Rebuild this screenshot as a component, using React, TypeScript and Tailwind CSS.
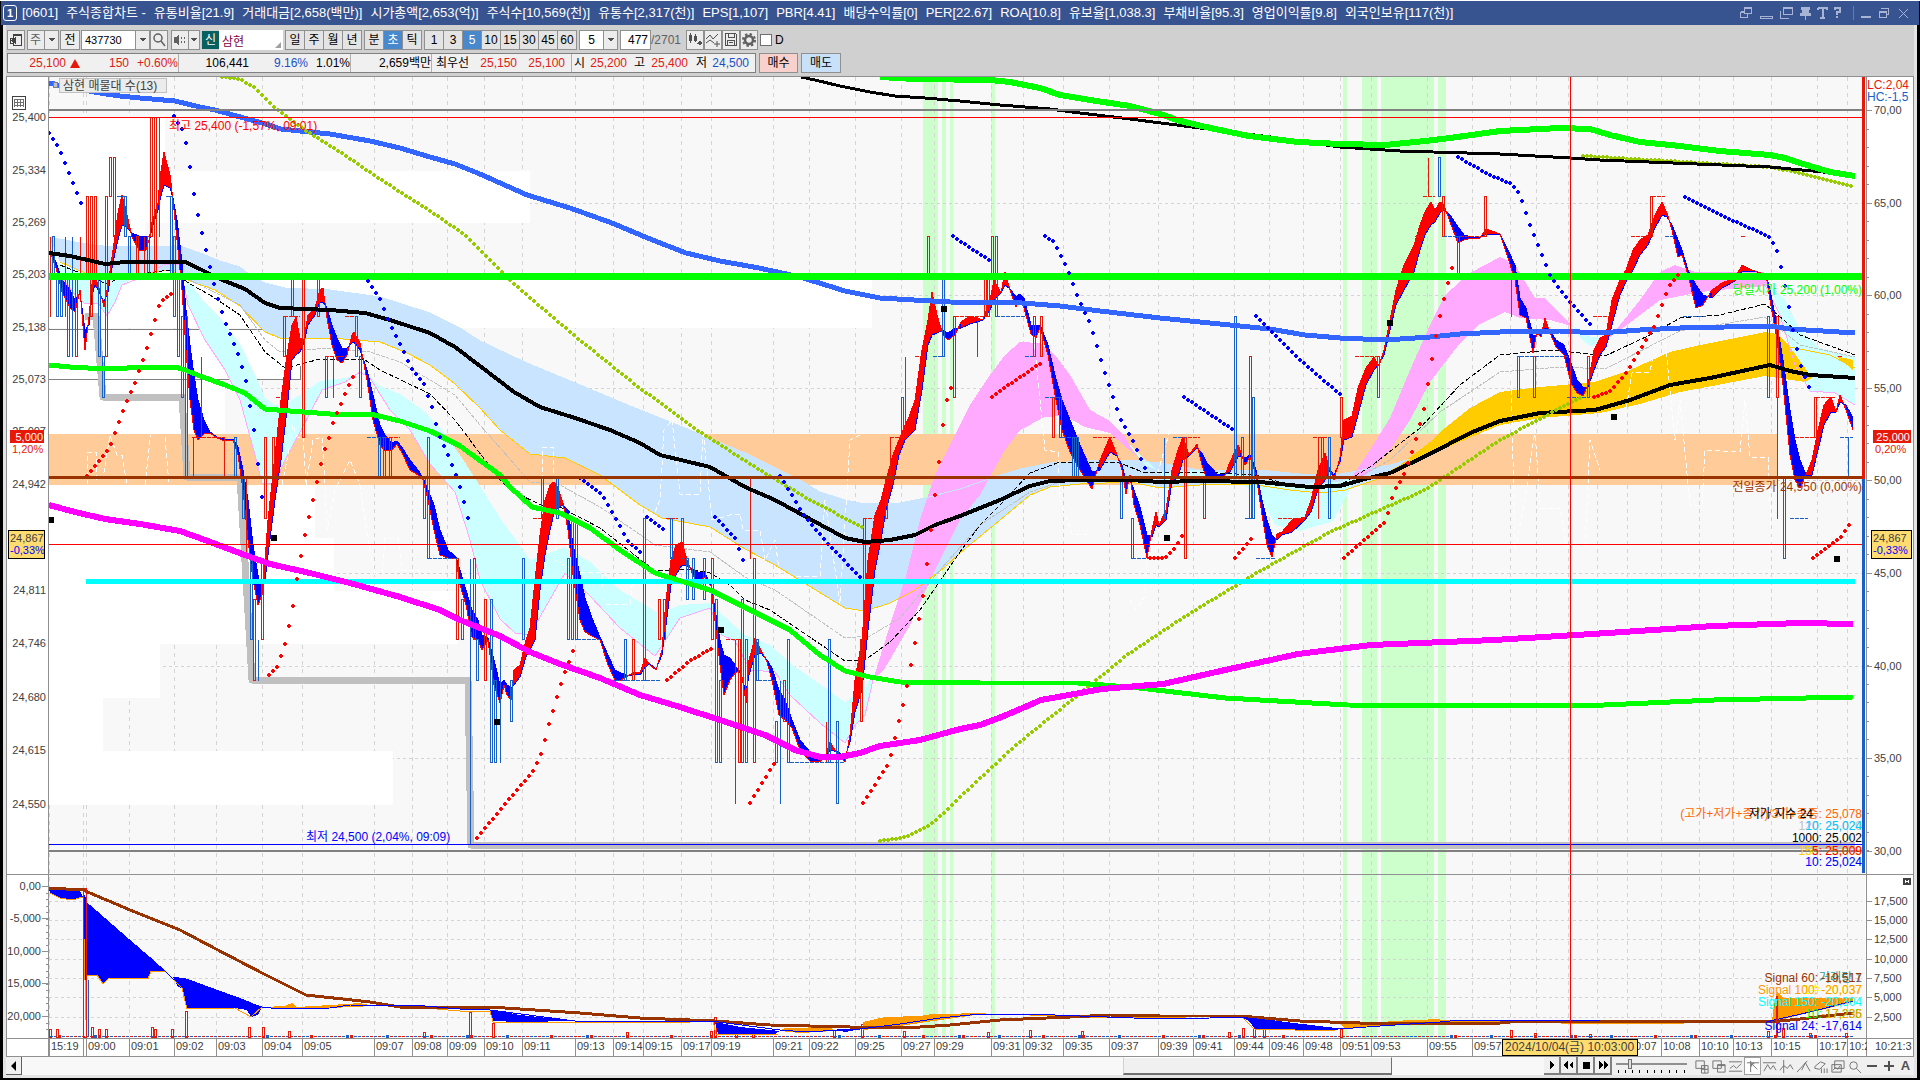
import type { ReactNode } from "react";

const RED = "#e81808";
const BLUE = "#1860c8";

// log price scale, 25,400 at the top and 24,500 at the bottom
const levelY = (price: number) => Math.round(117 + 20150 * Math.log(25400 / price));

const STATS = [
  "[0601]",
  "주식종합차트 -",
  "유통비율[21.9]",
  "거래대금[2,658(백만)]",
  "시가총액[2,653(억)]",
  "주식수[10,569(천)]",
  "유통수[2,317(천)]",
  "EPS[1,107]",
  "PBR[4.41]",
  "배당수익률[0]",
  "PER[22.67]",
  "ROA[10.8]",
  "유보율[1,038.3]",
  "부채비율[95.3]",
  "영업이익률[9.8]",
  "외국인보유[117(천)]",
];

const TIMES: [number, string][] = [
  [49, "15:19"], [83, ""], [86, "09:00"], [129, "09:01"], [174, "09:02"], [216, "09:03"], [262, "09:04"],
  [302, "09:05"], [374, "09:07"], [412, "09:08"], [447, "09:09"], [484, "09:10"], [522, "09:11"],
  [575, "09:13"], [613, "09:14"], [643, "09:15"], [681, "09:17"], [711, "09:19"], [773, "09:21"],
  [809, "09:22"], [855, "09:25"], [901, "09:27"], [934, "09:29"], [991, "09:31"], [1023, "09:32"],
  [1063, "09:35"], [1109, "09:37"], [1158, "09:39"], [1193, "09:41"], [1234, "09:44"], [1269, "09:46"],
  [1303, "09:48"], [1340, "09:51"], [1371, "09:53"], [1427, "09:55"], [1472, "09:57"], [1510, ""],
  [1536, ""], [1568, ""], [1597, ""], [1627, "10:07"], [1661, "10:08"], [1699, "10:10"], [1733, "10:13"],
  [1771, "10:15"], [1817, "10:17"], [1847, "10:2"],
];

const LEFT_LABELS: [number, string][] = [
  [117, "25,400"], [170, "25,334"], [222, "25,269"], [274, "25,203"], [327, "25,138"], [379, "25,073"],
  [431, "25,007"], [484, "24,942"], [590, "24,811"], [643, "24,746"], [697, "24,680"], [750, "24,615"],
  [804, "24,550"],
];
const RIGHT_LABELS: [number, string][] = [
  [110, "70,00"], [203, "65,00"], [295, "60,00"], [388, "55,00"], [480, "50,00"], [573, "45,00"],
  [666, "40,00"], [758, "35,00"], [851, "30,00"],
];
const SUB_LEFT: [number, string][] = [
  [886, "0,00"], [918, "-5,000"], [951, "10,000"], [983, "15,000"], [1016, "20,000"],
];
const SUB_RIGHT: [number, string][] = [
  [901, "17,500"], [920, "15,000"], [939, "12,500"], [959, "10,000"], [978, "7,500"], [997, "5,000"], [1017, "2,500"],
];

// volume-by-price rows: y, bottom, right edge
const PROFILE = [
  [118, 171, 165], [171, 223, 530], [223, 276, 145], [276, 328, 872], [329, 379, 300], [379, 434, 225],
  [485, 538, 315], [538, 591, 334], [591, 644, 458], [644, 698, 160], [698, 751, 103], [751, 805, 393],
];
const BANDS = [
  [923, 938], [942, 946], [950, 953], [991, 995], [1343, 1347], [1362, 1377], [1381, 1434], [1438, 1446],
];

const LINES = {
  upperBlue:
    "49,83 62,86 100,93 120,96 140,98 175,101 200,107 215,110 262,123 281,129 330,134 370,141 400,148 430,157 455,164 480,174 527,195 570,208 612,223 650,239 686,253 720,261 759,268 800,277 845,291 860,294 880,298 914,300 950,302 1022,303 1060,306 1100,311 1160,318 1220,324 1270,329 1305,335 1340,338 1385,340 1430,337 1460,334 1500,332 1560,331 1600,333 1640,330 1680,328 1770,326 1790,329 1855,333",
  upperBlack:
    "801,77 815,80 840,86 870,92 895,96 925,98 960,101 1000,105 1050,109 1080,113 1130,119 1200,128 1286,139 1340,147 1400,151 1500,154 1570,158 1600,160 1770,167 1855,175",
  upperGreen:
    "880,77 915,79 990,80 1010,82 1040,88 1060,95 1090,100 1130,106 1160,114 1180,121 1215,129 1249,136 1298,142 1340,144 1385,145 1425,141 1450,138 1500,131 1560,128 1590,129 1610,135 1640,142 1680,146 1720,151 1770,155 1785,158 1800,163 1830,172 1855,176",
  midGreen:
    "49,365 70,367 105,369 150,367 175,367 185,370 200,376 225,385 245,393 265,409 290,411 330,414 370,414 400,421 430,431 460,446 500,475 510,487 532,507 560,513 590,528 620,550 655,573 710,590 730,600 760,615 790,630 820,655 845,671 870,677 900,682 980,683 1078,683 1139,688 1225,698 1347,705 1518,706 1604,705 1714,700 1853,697",
  magenta:
    "49,505 75,512 105,519 140,524 180,531 205,540 245,555 270,564 310,573 350,583 400,597 440,610 460,620 500,636 530,652 560,664 600,678 640,695 680,707 720,720 765,735 795,750 820,757 840,757 860,753 880,746 920,740 960,729 980,725 1004,716 1041,700 1102,689 1163,684 1225,670 1298,654 1371,645 1494,640 1592,634 1714,626 1800,623 1853,624",
  mainBlack:
    "49,253 70,256 105,264 125,262 160,262 185,262 200,269 220,279 245,289 265,303 280,308 330,310 365,313 390,320 430,333 455,347 480,366 514,392 540,407 575,418 610,430 640,443 660,455 710,467 745,487 775,500 845,538 865,542 890,540 915,535 935,525 960,516 1000,500 1030,486 1050,481 1080,480 1130,480 1160,482 1200,481 1260,482 1290,485 1310,487 1340,486 1365,479 1390,473 1430,454 1470,433 1500,421 1540,413 1595,410 1630,400 1670,385 1710,378 1770,365 1790,371 1810,375 1855,378",
  gray: "85,316 96,316 103,397 182,397 187,477 240,477 252,680 468,680 471,845 1855,845",
  dashBlack:
    "60,265 85,275 107,284 115,280 140,274 170,270 190,284 210,295 240,315 265,352 285,368 305,363 320,359 365,360 380,370 430,394 455,420 500,480 510,490 545,507 560,507 600,528 655,571 690,569 710,573 730,585 745,600 770,610 845,661 865,660 890,642 920,610 960,552 980,525 1000,505 1030,473 1060,462 1120,463 1145,473 1200,472 1255,475 1300,488 1340,485 1370,467 1420,428 1460,385 1500,355 1520,353 1550,350 1580,353 1605,356 1650,335 1680,318 1720,315 1765,304 1785,321 1800,335 1855,355",
  dashGray:
    "190,280 240,305 265,340 280,352 330,348 370,352 400,362 430,380 455,395 480,425 530,482 560,485 600,507 655,545 710,552 745,577 775,590 845,638 870,636 900,618 940,570 980,525 1030,492 1060,482 1120,478 1260,480 1320,487 1350,482 1390,460 1440,412 1500,372 1560,367 1605,369 1680,331 1765,317 1800,345 1855,357",
};

const BLUE_TOP =
  "49,237 80,243 110,247 180,246 200,253 220,261 240,267 250,275 265,283 285,288 330,290 380,297 430,313 460,328 480,341 527,363 580,385 640,410 690,430 750,455 800,480 820,492 845,500 865,504 900,503 925,498 960,489 1000,475 1020,469 1050,463 1100,460 1130,460 1160,463 1200,470 1260,470 1300,474 1340,474 1390,465 1410,459";
const YELLOW_LINE =
  "60,262 85,273 107,278 140,274 170,270 190,281 215,290 240,306 265,332 280,338 330,338 380,342 405,352 430,365 455,384 480,408 500,430 530,454 565,458 600,475 640,505 662,518 710,527 745,549 775,565 845,608 865,611 890,603 915,590 945,567 960,553 1000,520 1030,495 1050,487 1080,484 1130,482 1160,488 1200,485 1250,484 1290,490 1320,493 1345,490 1375,480 1410,460";
const GOLD_CLOUD =
  "1400,465 1430,442 1440,432 1470,408 1500,392 1540,387 1595,382 1630,370 1670,352 1700,345 1765,332 1777,334 1790,347 1812,378 1805,382 1765,376 1680,392 1640,404 1600,413 1540,418 1500,425 1440,450";
const PINK_LINE =
  "60,275 75,295 85,304 98,303 107,316 115,302 122,285 135,280 145,276 165,264 180,265 188,305 205,340 225,370 240,400 255,455 262,483 275,484 285,460 300,432 322,390 345,382 360,372 370,378 390,410 410,430 430,464 455,492 470,540 480,580 500,619 515,633 530,635 545,608 565,573 590,596 620,628 655,656 680,618 710,608 722,635 735,641 750,670 775,672 790,695 820,723 845,743 855,725 865,715 873,680";
const CYAN_TOP =
  "873,672 865,688 845,702 790,663 770,645 745,635 725,617 710,603 680,605 660,614 620,590 590,562 565,547 530,560 500,518 475,478 460,455 440,427 420,408 400,394 380,386 365,372 345,378 320,381 300,395 285,404 275,405 265,398 255,375 240,344 220,318 205,303 185,276";
const CYAN_CLOUDS = [
  "55,262 70,268 85,272 105,276 135,278 122,285 115,302 107,316 98,303 85,304 75,295 60,275",
  PINK_LINE.slice(PINK_LINE.indexOf("188,305")) + " " + CYAN_TOP,
  "1125,440 1145,465 1165,473 1195,470 1240,474 1260,480 1300,484 1340,482 1358,474 1340,508 1332,522 1320,525 1300,531 1275,525 1262,500 1240,482 1170,483",
  "1572,325 1590,337 1606,338 1600,344 1590,346 1580,338",
  "1770,285 1785,300 1800,330 1820,348 1855,357 1855,405 1835,393 1810,391 1795,365 1780,315",
];
const PINK_CLOUDS = [
  "873,680 890,625 905,580 920,520 935,475 950,445 970,405 990,375 1005,355 1020,342 1040,343 1055,355 1070,375 1090,410 1110,421 1125,437 1135,455 1110,433 1085,427 1065,416 1045,417 1020,430 1005,450 980,495 960,520 935,570 910,625 885,668",
  "1350,480 1370,450 1390,418 1410,370 1430,325 1445,295 1470,273 1500,257 1515,265 1535,298 1545,298 1572,326 1550,320 1520,318 1505,312 1480,324 1460,343 1430,382 1410,420 1390,450 1365,475",
  "1606,340 1620,325 1640,300 1660,272 1675,265 1695,272 1764,272 1768,286 1740,288 1700,292 1660,300 1620,330",
];

// x, fast average, slow average
const RIBBON = [
  [50, 252, 250], [56, 268, 262], [62, 292, 280], [70, 308, 290], [75, 312, 300], [80, 290, 293], [85, 350, 330],
  [89, 317, 325], [92, 284, 295], [95, 278, 285], [98, 284, 290], [104, 307, 302], [108, 285, 292], [113, 250, 262],
  [118, 213, 240], [122, 195, 225], [126, 210, 227], [132, 237, 233], [139, 250, 236], [146, 250, 236], [149, 240, 243],
  [152, 222, 228], [158, 203, 210], [160, 178, 200], [164, 152, 185], [170, 175, 188], [173, 200, 198], [177, 240, 220],
  [182, 290, 262], [186, 350, 310], [190, 400, 345], [194, 430, 375], [198, 440, 400], [204, 434, 420], [210, 433, 432],
  [217, 438, 437], [225, 441, 439], [233, 440, 439], [238, 455, 447], [243, 490, 470], [248, 540, 500], [253, 580, 545],
  [258, 605, 575], [262, 595, 590], [265, 560, 580], [268, 520, 555], [275, 455, 500], [281, 400, 460], [287, 355, 410],
  [292, 325, 360], [296, 317, 355], [300, 338, 352], [304, 340, 342], [308, 315, 325], [315, 308, 315], [320, 290, 302],
  [323, 288, 302], [327, 318, 308], [332, 345, 325], [337, 360, 338], [342, 363, 348], [347, 355, 348], [352, 335, 343],
  [354, 332, 342], [360, 343, 350], [367, 380, 370], [373, 420, 395], [380, 445, 425], [385, 451, 435], [392, 450, 443],
  [397, 444, 441], [403, 455, 449], [410, 470, 460], [418, 475, 470], [423, 480, 478], [428, 500, 490], [434, 530, 505],
  [440, 555, 530], [448, 558, 550], [456, 558, 557], [460, 585, 570], [466, 605, 590], [472, 637, 610], [478, 640, 620],
  [482, 650, 635], [488, 640, 638], [494, 685, 660], [500, 703, 685], [504, 685, 680], [507, 695, 685], [511, 700, 688],
  [514, 670, 685], [520, 665, 677], [526, 640, 657], [530, 628, 650], [535, 580, 640], [540, 535, 590], [545, 500, 555],
  [550, 485, 530], [554, 482, 513], [558, 488, 508], [563, 503, 505], [568, 530, 510], [573, 575, 545], [580, 620, 575],
  [585, 632, 598], [592, 636, 618], [600, 640, 637], [608, 665, 655], [615, 680, 670], [621, 680, 673], [629, 675, 676],
  [634, 672, 674], [640, 673, 675], [645, 658, 667], [650, 665, 664], [656, 670, 669], [662, 650, 655], [666, 600, 625],
  [671, 560, 585], [676, 545, 575], [682, 542, 565], [687, 560, 566], [693, 575, 570], [698, 585, 572], [704, 577, 572],
  [711, 586, 584], [716, 630, 615], [720, 665, 640], [724, 695, 655], [730, 680, 658], [735, 673, 665], [741, 670, 675],
  [746, 703, 692], [749, 660, 675], [755, 638, 655], [761, 650, 653], [767, 662, 660], [772, 680, 668], [779, 715, 690],
  [785, 720, 700], [792, 728, 720], [800, 750, 740], [810, 761, 752], [820, 762, 760], [826, 755, 757], [830, 742, 750],
  [838, 755, 752], [845, 762, 757], [850, 735, 742], [855, 680, 712], [862, 640, 690], [868, 560, 630], [875, 515, 570],
  [881, 500, 540], [886, 480, 510], [893, 455, 485], [899, 440, 455], [905, 425, 440], [909, 417, 436], [915, 400, 430],
  [922, 350, 390], [928, 320, 345], [932, 292, 335], [937, 315, 333], [943, 335, 330], [948, 340, 333], [955, 335, 328],
  [961, 322, 328], [970, 316, 324], [983, 320, 320], [990, 300, 310], [994, 280, 300], [1001, 293, 293], [1005, 272, 285],
  [1010, 290, 289], [1016, 307, 297], [1020, 300, 294], [1024, 308, 298], [1031, 334, 325], [1036, 338, 325],
  [1040, 327, 325], [1048, 355, 345], [1055, 395, 375], [1062, 430, 400], [1070, 452, 420], [1080, 470, 445],
  [1092, 489, 472], [1100, 460, 470], [1110, 437, 452], [1117, 455, 456], [1122, 470, 465], [1126, 494, 480],
  [1130, 475, 480], [1134, 505, 490], [1140, 525, 507], [1147, 558, 535], [1152, 530, 537], [1156, 512, 525],
  [1159, 525, 527], [1166, 510, 520], [1172, 470, 482], [1178, 450, 477], [1183, 437, 460], [1189, 455, 456],
  [1197, 444, 448], [1202, 465, 453], [1207, 480, 463], [1218, 482, 475], [1225, 475, 474], [1230, 462, 472],
  [1238, 445, 457], [1240, 450, 456], [1245, 465, 458], [1250, 457, 455], [1256, 475, 470], [1262, 515, 500],
  [1267, 545, 520], [1272, 557, 535], [1277, 534, 540], [1282, 532, 535], [1292, 520, 532], [1305, 517, 520],
  [1311, 500, 512], [1318, 470, 490], [1325, 453, 480], [1330, 470, 470], [1334, 480, 475], [1340, 457, 462],
  [1344, 420, 440], [1352, 416, 437], [1358, 388, 415], [1366, 368, 385], [1374, 357, 370], [1379, 366, 364],
  [1384, 350, 355], [1390, 320, 330], [1396, 290, 305], [1404, 265, 290], [1414, 245, 272], [1420, 225, 250],
  [1425, 212, 235], [1431, 202, 225], [1435, 210, 222], [1440, 202, 213], [1444, 205, 210], [1450, 222, 215],
  [1458, 243, 227], [1464, 240, 235], [1472, 238, 237], [1480, 238, 237], [1486, 229, 234], [1500, 234, 234],
  [1507, 255, 248], [1515, 280, 265], [1520, 315, 298], [1526, 318, 308], [1533, 353, 335], [1537, 332, 335],
  [1541, 337, 333], [1545, 318, 328], [1550, 333, 330], [1556, 347, 340], [1564, 355, 345], [1571, 383, 363],
  [1577, 393, 380], [1583, 396, 387], [1588, 385, 387], [1594, 350, 370], [1600, 338, 355], [1606, 335, 347],
  [1612, 300, 325], [1620, 280, 295], [1626, 270, 282], [1633, 250, 270], [1640, 240, 255], [1648, 235, 245],
  [1655, 215, 228], [1662, 202, 215], [1667, 213, 217], [1672, 230, 225], [1678, 257, 240], [1682, 255, 250],
  [1688, 275, 270], [1696, 308, 285], [1703, 305, 295], [1712, 290, 298], [1722, 283, 288], [1735, 278, 281],
  [1742, 265, 271], [1752, 270, 271], [1766, 275, 274], [1770, 300, 290], [1777, 340, 325], [1783, 385, 360],
  [1790, 455, 410], [1795, 480, 440], [1800, 488, 460], [1806, 475, 475], [1812, 460, 475], [1818, 430, 450],
  [1824, 405, 425], [1831, 397, 412], [1836, 412, 412], [1840, 395, 402], [1846, 410, 405], [1853, 430, 418],
];

// x, high, low, width
const RED_CANDLES = [
  [50, 25250, 25150, 0], [65, 25250, 25150, 0], [76, 25200, 25100, 2], [80, 25250, 25200, 0], [87, 25300, 25200, 2],
  [91, 25300, 25150, 2], [95, 25300, 25200, 2], [106, 25300, 25100, 2], [110, 25350, 25300, 2], [114, 25350, 25250, 2],
  [137, 25250, 25200, 2], [144, 25250, 25200, 0], [148, 25250, 25200, 2], [151, 25400, 25250, 2], [155, 25400, 25200, 2],
  [159, 25400, 25250, 0], [193, 25000, 24950, 0], [201, 25100, 25000, 0], [224, 25000, 24950, 0], [265, 25000, 24900, 2],
  [273, 25000, 24950, 2], [284, 25150, 25100, 2], [292, 25200, 25150, 2], [303, 25200, 25000, 2], [318, 25200, 25150, 2],
  [246, 24950, 24850, 0], [254, 24800, 24700, 2], [262, 24850, 24750, 2], [390, 25000, 24950, 2], [457, 24850, 24750, 2],
  [474, 24850, 24750, 2], [485, 24800, 24700, 2], [542, 24950, 24900, 2], [633, 24750, 24700, 2], [659, 24800, 24750, 2],
  [712, 24850, 24750, 2], [735, 24750, 24550, 0], [739, 24750, 24600, 2], [750, 24950, 24850, 0], [754, 24850, 24600, 2],
  [784, 24700, 24650, 2], [826, 24650, 24600, 0], [861, 24750, 24650, 2], [864, 24900, 24750, 2], [886, 24950, 24900, 2],
  [890, 25000, 24950, 0], [928, 25250, 25200, 2], [954, 25150, 25050, 2], [977, 25150, 25100, 0], [985, 25200, 25150, 2],
  [988, 25200, 25150, 2], [992, 25250, 25200, 2], [1034, 25150, 25100, 2], [1041, 25150, 25100, 2],
  [1053, 25050, 25000, 2], [1185, 25000, 24850, 2], [1204, 24950, 24900, 2], [1250, 25100, 24900, 2],
  [1318, 25000, 24900, 0], [1322, 25000, 24950, 2], [1341, 25050, 25000, 2], [1428, 25350, 25300, 0],
  [1443, 25300, 25250, 2], [1485, 25300, 25250, 2], [1534, 25100, 25050, 2], [1588, 25100, 25050, 2],
  [1651, 25300, 25250, 2], [1777, 25150, 25050, 2], [1777, 25050, 24900, 0], [1815, 25050, 25000, 2],
];
const BLUE_CANDLES = [
  [53, 25250, 25200, 2], [57, 25200, 25150, 2], [61, 25200, 25150, 2], [68, 25200, 25100, 2], [72, 25250, 25100, 0],
  [99, 25200, 25100, 2], [103, 25100, 25050, 2], [125, 25300, 25250, 2], [129, 25250, 25200, 2], [171, 25300, 25200, 2],
  [174, 25250, 25150, 2], [178, 25200, 25100, 2], [182, 25150, 25050, 2], [186, 25150, 24950, 2], [235, 25000, 24950, 2],
  [243, 24950, 24900, 2], [251, 24850, 24750, 2], [258, 24750, 24700, 0], [326, 25100, 25050, 2], [333, 25100, 25050, 0],
  [356, 25150, 25100, 2], [360, 25100, 25050, 2], [379, 25000, 24950, 2], [384, 25000, 24950, 2], [424, 24950, 24900, 2],
  [428, 25000, 24850, 2], [462, 24800, 24750, 2], [470, 24850, 24500, 0], [477, 24750, 24700, 2], [491, 24800, 24600, 2],
  [495, 24700, 24600, 2], [500, 24750, 24600, 0], [511, 24700, 24650, 2], [523, 24850, 24750, 2], [557, 24950, 24900, 2],
  [568, 24850, 24750, 2], [572, 24900, 24750, 2], [576, 24900, 24750, 2], [625, 24750, 24700, 2], [644, 24900, 24700, 2],
  [664, 24800, 24750, 2], [671, 24900, 24850, 2], [682, 24900, 24850, 2], [687, 24850, 24800, 2], [693, 24850, 24800, 2],
  [704, 24850, 24800, 2], [716, 24800, 24600, 2], [720, 24700, 24600, 2], [742, 24800, 24600, 2], [746, 24750, 24600, 2],
  [757, 24750, 24700, 2], [776, 24650, 24600, 2], [780, 24700, 24550, 0], [788, 24750, 24600, 2], [829, 24750, 24600, 2],
  [837, 24650, 24550, 2], [902, 25050, 25000, 2], [905, 25100, 25000, 0], [943, 25200, 25100, 2], [996, 25250, 25150, 2],
  [1060, 25050, 25000, 2], [1073, 25000, 24950, 2], [1077, 25000, 24950, 2], [1121, 24950, 24900, 2],
  [1132, 24900, 24850, 2], [1164, 25000, 24900, 0], [1235, 25150, 24950, 2], [1242, 25000, 24950, 2],
  [1253, 25050, 24900, 2], [1329, 25000, 24900, 2], [1378, 25100, 25050, 2], [1439, 25350, 25300, 2],
  [1458, 25250, 25200, 2], [1511, 25200, 25150, 0], [1518, 25100, 25050, 2], [1768, 25150, 25050, 2],
  [1784, 24950, 24850, 2], [1848, 25000, 24950, 0],
];

// unchanged bars: x1, x2, price
const RED_TICKS = [
  [192, 225, 25000], [276, 288, 25050], [284, 300, 25150], [384, 400, 25000], [345, 355, 25150], [325, 345, 25100],
  [533, 545, 24900], [666, 678, 24900], [726, 740, 24750], [863, 882, 24900], [890, 905, 25000], [915, 925, 25100],
  [955, 990, 25150], [1093, 1115, 25000], [1183, 1200, 25000], [1278, 1305, 24900], [1313, 1328, 25000],
  [1355, 1380, 25100], [1415, 1425, 25250], [1423, 1435, 25300], [1460, 1485, 25250], [1593, 1610, 25150],
  [1631, 1652, 25250], [1652, 1665, 25300], [1741, 1746, 25250], [1795, 1820, 25000], [1816, 1836, 25050], [1838, 1843, 25100],
];
const BLUE_TICKS = [
  [117, 126, 25300], [166, 172, 25300], [367, 385, 25000], [428, 458, 24850], [577, 600, 24750], [601, 660, 24700],
  [790, 845, 24600], [758, 775, 24700], [933, 945, 25100], [996, 1025, 25150], [1025, 1035, 25100], [1045, 1060, 25050],
  [1062, 1078, 25000], [1132, 1150, 24850], [1173, 1185, 25000], [1256, 1275, 24850], [1245, 1253, 24900],
  [1443, 1462, 25250], [1520, 1568, 25100], [1567, 1590, 25050], [1665, 1673, 25250], [1683, 1706, 25150],
  [1790, 1808, 24900], [1840, 1853, 25000],
];

const BLUE_DOTS = [
  "49,133 60,150 68,170 78,195 84,211",
  "174,116 182,129 186,143 190,167 193,189 197,210 201,229 209,263 216,293 227,327 239,356 246,381 249,400 254,430 262,497",
  "368,281 379,297 390,324 401,346 412,369 424,384 432,407 438,432 450,460 458,480 466,509 470,527",
  "580,478 602,494 617,521 628,541 640,552",
  "647,517 663,529",
  "715,517 735,538 742,557 746,567",
  "780,476 790,492 803,514 829,545 861,578",
  "953,236 970,248 989,260",
  "1045,236 1054,242 1068,270 1079,300 1090,323 1105,373 1120,418 1135,445 1147,472",
  "1184,397 1232,429",
  "1256,316 1300,360 1342,396",
  "1458,157 1490,175 1512,184 1520,195 1530,225 1540,250 1550,275 1560,290 1571,303 1580,313 1591,325",
  "1685,197 1720,215 1768,236 1776,247 1780,262 1787,296 1793,330 1800,363 1810,390",
];
const RED_DOTS = [
  "87,476 102,457 110,447 114,436 122,413 135,383 148,345 160,302 171,294",
  "269,675 277,667 284,648 292,613 299,566 307,525 315,491 323,455 330,435 333,423 345,394 356,370",
  "477,838 500,810 534,770 542,752 549,724 557,697 564,675 572,654 576,643",
  "667,680 690,661 712,648",
  "750,803 775,762",
  "863,803 889,763 893,747 898,725 905,697 912,660 918,625 924,590 931,530 935,495 939,462 943,425 947,400 951,388",
  "992,397 1010,384 1041,363",
  "1150,558 1165,558 1175,548 1182,536",
  "1235,558 1253,537",
  "1344,558 1386,521 1391,500 1396,488 1403,477 1414,446 1424,409 1431,365 1438,325 1443,303 1450,275 1454,261",
  "1594,397 1610,391 1625,375 1640,350 1655,325 1668,288 1680,272",
  "1813,558 1840,538 1852,520",
];
const OLIVE_DOTS = [
  "222,77 240,79 255,88 275,108 300,127 340,152 380,179 430,211 465,235 480,250 514,284 576,337 637,386 700,432 760,470 810,500 862,527",
  "880,841 895,839 910,835 930,825 945,812 960,797 1016,745 1078,695 1127,655 1184,617 1260,571 1330,532 1425,490 1500,440 1583,396",
  "1583,156 1770,167 1800,173 1853,187",
];

const SQUARES = [
  [51, 520], [274, 538], [497, 722], [721, 630], [944, 309], [1167, 538], [1390, 323], [1614, 417], [1837, 559],
];

const WHITE_DASHES = [
  "87,485 88,452 96,452 97,480 103,478 110,435 117,455 122,455 127,485",
  "145,485 150,440 151,435",
  "165,437 169,485",
  "282,485 287,460 293,425 297,437 303,437 306,485 313,440 322,437 325,485 327,530 335,490 350,460 360,485 368,540 380,600 385,538 398,538 402,570 420,570",
  "541,520 543,447 553,447 556,560 575,572 602,572 604,604 630,604 635,560 660,500 664,430 672,420 680,494 700,494 703,430 712,520 730,515 740,514 743,530 760,530 765,560 775,540 780,576 820,576 825,500 840,604 850,440 860,435",
  "1030,320 1035,350 1045,450 1058,452 1060,500 1072,534 1090,534",
  "1130,600 1135,610 1145,597 1150,500 1170,430",
  "1510,350 1512,414 1515,550 1525,500 1535,430 1540,508 1560,508 1567,548 1585,548 1590,440 1600,470",
  "1625,416 1632,373 1650,372 1655,345 1665,340 1675,440 1680,400 1690,505 1702,505 1705,450 1740,452 1745,400 1750,457 1768,457 1772,550",
];

const VOLUME = new Map<number, number>([
  [50, 8], [57, 8], [92, 10], [99, 8], [106, 8], [152, 10], [155, 8], [172, 8], [186, 26], [249, 10], [263, 10],
  [289, 6], [424, 5], [470, 25], [493, 14], [627, 5], [711, 6], [715, 20], [736, 7], [753, 6], [834, 7], [862, 13],
  [904, 6], [988, 5], [1030, 7], [1082, 6], [1229, 5], [1243, 9], [1254, 9], [1264, 9], [1341, 8], [1511, 7],
  [1535, 4], [1590, 3], [1768, 6], [1783, 9], [1810, 4], [1846, 4],
]);

function parse(points: string) {
  return points.split(" ").map((p) => p.split(",").map(Number));
}

function Dots({ points, color, step }: { points: string; color: string; step: number }) {
  const pts = parse(points);
  const out: ReactNode[] = [];
  let i = 0;
  for (let x = pts[0][0]; x <= pts[pts.length - 1][0]; x += step) {
    while (i < pts.length - 2 && x > pts[i + 1][0]) i++;
    const [x1, y1] = pts[i];
    const [x2, y2] = pts[i + 1];
    const y = Math.round(y1 + ((x - x1) / (x2 - x1)) * (y2 - y1));
    out.push(<path key={x} d={`M${x - 2} ${y - 1}h4v2h-4zM${x - 1} ${y - 2}h2v4h-2z`} />);
  }
  return <g fill={color}>{out}</g>;
}

function Line({ points, color, width = 1, dash }: { points: string; color: string; width?: number; dash?: string }) {
  return <polyline points={points} fill="none" stroke={color} strokeWidth={width} strokeDasharray={dash} strokeLinejoin="round" />;
}

function Candles({ data, color }: { data: number[][]; color: string }) {
  return (
    <g stroke={color} fill="none">
      {data.map(([x, high, low, w], i) => {
        const y = levelY(high) + 0.5;
        const h = levelY(low) - levelY(high);
        return w ? <rect key={i} x={x - 0.5} y={y} width={w} height={h} /> : <path key={i} d={`M${x + 0.5} ${y}v${h}`} />;
      })}
    </g>
  );
}

function Ribbon() {
  return (
    <g>
      {RIBBON.slice(1).map(([x, f, s], i) => {
        const [px, pf, ps] = RIBBON[i];
        const up = f + pf <= s + ps;
        return <polygon key={x} points={`${px},${pf} ${x},${f} ${x},${s} ${px},${ps}`} fill={up ? "#ff0000" : "#0000ff"} />;
      })}
      <Line points={RIBBON.map(([x, , s]) => `${x},${s}`).join(" ")} color="#0000ff" />
      <Line points={RIBBON.map(([x, f]) => `${x},${f}`).join(" ")} color="#ff0000" />
    </g>
  );
}

function AxisLabels({ labels, x, anchor }: { labels: [number, string][]; x: number; anchor: "start" | "end" }) {
  return (
    <g fill="#404040" className="text-[11px]">
      {labels.map(([y, label]) => (
        <text key={label} x={x} y={y + 4} textAnchor={anchor}>{label}</text>
      ))}
    </g>
  );
}

function EndText({ x = 1862, y, color, children }: { x?: number; y: number; color: string; children: string }) {
  return <text x={x} y={y} fill={color} textAnchor="end">{children}</text>;
}

function PriceTag({ x, width, text }: { x: number; width: number; text: string }) {
  return (
    <g className="text-[11px]">
      <rect x={x} y="430" width={width} height="13" fill={RED} />
      <text x={x + width - 1} y="441" fill="#fff" textAnchor="end">{text}</text>
      <rect x={x - 1.5} y="530.5" width={width + 2} height="28" fill="#ffdc70" stroke="#000" />
      <text x={x} y="542" fill="#404040">24,867</text>
      <text x={x} y="554" fill="#0000ff">-0,33%</text>
    </g>
  );
}

function MainPane() {
  const blueCloud = BLUE_TOP + " " + YELLOW_LINE.split(" ").reverse().join(" ");
  return (
    <g>
      {PROFILE.map(([y, bottom, right]) => (
        <rect key={y} x="49" y={y} width={right - 49} height={bottom - y} fill="#fff" />
      ))}
      <path d="M49 329.5H278M49 379.5H300V366" stroke="#808080" fill="none" />
      <rect x="49" y="434" width="1728" height="51" fill="#ffcc99" />
      <polygon points={blueCloud} fill="#c8e4ff" />
      {CYAN_CLOUDS.map((p) => <polygon key={p} points={p} fill="#ccffff" />)}
      {PINK_CLOUDS.map((p) => <polygon key={p} points={p} fill="#ffaaff" />)}
      <polygon points={GOLD_CLOUD} fill="#ffcc00" />
      <polygon points="1836,356 1853,360 1853,370" fill="#ffcc00" />
      <Line points={BLUE_TOP} color="#c8e4ff" />
      <Line points={YELLOW_LINE} color="#ffcc00" />
      <Line points="1790,347 1830,355 1855,368" color="#ffcc00" />
      <Line points={PINK_LINE} color="#ffaaff" />
      <Line points="1765,285 1780,315 1795,365 1810,391 1835,393 1855,405" color="#ffaaff" />
      {WHITE_DASHES.map((p) => <Line key={p} points={p} color="#fff" dash="5 3" />)}
      <Line points={LINES.gray} color="#c0c0c0" width={7} />
      <Line points={LINES.dashGray} color="#c0c0c0" dash="4 1" />
      <Line points={LINES.dashBlack} color="#000" dash="5 2" />
      <Ribbon />
      <Candles data={RED_CANDLES} color={RED} />
      <Candles data={BLUE_CANDLES} color={BLUE} />
      {RED_TICKS.map(([x1, x2, p]) => (
        <path key={`${x1}-${p}`} d={`M${x1} ${levelY(p) + 0.5}H${x2}`} stroke={RED} strokeDasharray="4 1" />
      ))}
      {BLUE_TICKS.map(([x1, x2, p]) => (
        <path key={`${x1}-${p}`} d={`M${x1} ${levelY(p) + 0.5}H${x2}`} stroke={BLUE} strokeDasharray="4 1" />
      ))}
      <Line points={LINES.mainBlack} color="#000" width={4} />
      <Line points={LINES.upperBlue} color="#3366ff" width={5} />
      {OLIVE_DOTS.map((p) => <Dots key={p} points={p} color="#99cc00" step={4} />)}
      <Line points={LINES.upperBlack} color="#000" width={3} />
      <Line points={LINES.upperGreen} color="#00ff00" width={6} />
      <path d="M49 276.5H1862" stroke="#00ff00" strokeWidth="7" />
      <path d="M86 581.5H1855" stroke="#00ffff" strokeWidth="5" />
      <Line points={LINES.midGreen} color="#00ff00" width={5} />
      <Line points={LINES.magenta} color="#ff00ff" width={6} />
      {BLUE_DOTS.map((p) => <Dots key={p} points={p} color="#0000ff" step={4} />)}
      {RED_DOTS.map((p) => <Dots key={p} points={p} color="#ff0000" step={4} />)}
      {SQUARES.map(([x, y]) => <rect key={x} x={x - 3} y={y - 3} width="6" height="6" />)}
      <path d="M49 477.5H1862" stroke="#993300" strokeWidth="3" />
      <path d="M49 110H1862M49 851H1862" stroke="#808080" strokeWidth="2" />
      <path d="M49 117.5H1862" stroke="#ff0000" />
      <path d="M49 844.5H1862" stroke="#0000ff" />
      <path d="M49 544.5H1864" stroke="#ff0000" />

      <text x="169" y="130" fill="#ff0000">최고 25,400 (-1,57%, 09:01)</text>
      <text x="306" y="841" fill="#0000ff">최저 24,500 (2,04%, 09:09)</text>
      <EndText y={294} color="#00ff00">당일시가 25,200 (1,00%)</EndText>
      <EndText y={491} color="#993300">전일종가 24,950 (0,00%)</EndText>
      <EndText y={818} color="#ff6600">(고가+저가+종가)/3가+종중: 25,078</EndText>
      <EndText x={1813} y={818} color="#000">저가 지수 24</EndText>
      <EndText y={830} color="#c0c0c0">120: 25,020</EndText>
      <EndText y={830} color="#00ccff">10: 25,024</EndText>
      <EndText y={842} color="#000">1000: 25,002</EndText>
      <EndText y={855} color="#ffcc00">150: 25,003</EndText>
      <EndText y={855} color="#ff0000">5: 25,009</EndText>
      <EndText y={866} color="#c8e4ff">30: 25,024</EndText>
      <EndText y={866} color="#0000ff">10: 25,024</EndText>
    </g>
  );
}

function VolumePane() {
  const bars: ReactNode[] = [];
  for (let x = 50, i = 0; x < 1853; x += 4, i++) {
    const quiet = (i * 7 + (i % 11) * 5) % 13;
    bars.push(
      <path key={x} d={`M${x} 1036.5h3`} stroke={quiet % 2 ? RED : BLUE} strokeWidth={quiet > 10 && x % 3 ? 3 : 1} />
    );
  }
  return (
    <g>
      {bars}
      {[...VOLUME].map(([x, h]) => (
        <rect key={x} x={x - 0.5} y={1037 - h} width="2" height={h} fill="none" stroke={RED} />
      ))}
      <g fill="#0000ff">
        <polygon points="49,888 80,891 83,897 72,900 60,898 50,893" />
        <polygon points="83,892 87,903 100,914 120,932 150,957 165,971 151,971 148,979 130,979 109,978 103,984 97,975 87,975 86,1020" />
        <polygon points="173,977 185,978 215,989 240,998 262,1007 258,1015 251,1017 247,1010 235,1008 190,1008 187,1009 184,995 182,988 178,987" />
        <polygon points="460,1009 487,1009 520,1015 575,1021 520,1022 492,1021 490,1010" />
        <polygon points="715,1022 740,1027 780,1031 775,1034 718,1034" />
        <polygon points="835,1029 860,1029 845,1032" />
        <polygon points="1242,1017 1260,1018 1290,1023 1340,1029 1333,1031 1255,1029 1250,1022" />
      </g>
      <g fill="#ff9900">
        <polygon points="262,1007 285,1006 292,1003 296,1007 330,1005 360,1003 374,1006 330,1008 280,1009" />
        <polygon points="780,1031 785,1028 830,1027 834,1031 800,1033" />
        <polygon points="863,1022 885,1017 920,1016 932,1014 990,1013 975,1015 940,1020 900,1026 863,1030" />
        <polygon points="1340,1024 1380,1024 1390,1021 1440,1019 1440,1023 1400,1025 1345,1028" />
        <polygon points="1772,1021 1774,1005 1777,992 1783,998 1853,998 1853,1002 1780,1020" />
      </g>
      <Line points="50,893 60,898 72,900 83,897 86,1020 87,975 97,975 103,984 109,978 148,979 151,971 165,971 173,979 182,988 187,1009 235,1008 251,1017 262,1007" color="#ff9900" width={1} />
      <Line points="425,1008 460,1011 490,1011 493,1022 575,1022 690,1022 713,1021 716,1034 778,1034" color="#ff9900" />
      <Line points="1030,1015 1080,1017 1160,1018 1240,1015 1254,1029 1335,1031" color="#ff9900" />
      <Line points="1440,1021 1520,1022 1600,1023 1770,1022" color="#ff9900" width={2} />
      <Line points="49,888 83,890 130,910 180,930 216,949 262,973 306,995 370,1002 400,1007 490,1007 580,1013 640,1018 715,1021 770,1025 850,1027 920,1027 950,1025 1000,1020 1070,1017 1110,1015 1160,1016 1240,1016 1300,1021 1360,1023 1440,1023 1500,1023 1520,1021 1770,1022 1800,1019 1853,1013" color="#993300" width={3} />
      <Line points="83,892 87,903 165,971 173,979 262,1007 280,1009 330,1008 350,1005 425,1006 460,1009 490,1010 575,1021 711,1021 780,1030 805,1032 860,1029 900,1024 940,1018 980,1014 1030,1014 1080,1016 1160,1019 1210,1018 1240,1017 1340,1029 1380,1026 1440,1022 1460,1020 1520,1020 1600,1021 1770,1021 1810,1012 1853,1001" color="#0000ff" />
      <rect x="83.5" y="888.5" width="3" height="149" fill="none" stroke={RED} />
      <path d="M88.5 980V1037" stroke={BLUE} />
      <path d="M1776.5 996V1037" stroke={RED} strokeWidth="2" />
      <EndText y={982} color="#339999">거래량 1</EndText>
      <EndText y={982} color="#993300">Signal 60: -19,517</EndText>
      <EndText y={994} color="#ffff00">1수-20,037</EndText>
      <EndText y={994} color="#ff9900">Signal 100: -20,037</EndText>
      <EndText y={1006} color="#00ffff">Signal 150: -20,304</EndText>
      <EndText y={1018} color="#00ff00">10: 17,235</EndText>
      <EndText y={1018} color="#ff9900">-17,236</EndText>
      <EndText y={1030} color="#0000ff">Signal 24: -17,614</EndText>
    </g>
  );
}

function Chart() {
  const gridX = TIMES.map(([x]) => `M${x + 0.5} 77V1038`).join("");
  const gridY = [...RIGHT_LABELS, ...SUB_RIGHT].map(([y]) => `M49 ${y + 0.5}H1862`).join("");
  const minor: ReactNode[] = [];
  for (let i = 0; i < 41; i++) minor.push(<path key={i} d={`M1866 ${Math.round(110 + i * 18.5) + 0.5}h3`} />);
  for (let i = 0; i < 23; i++) minor.push(<path key={`b${i}`} d={`M48 ${Math.round(886 + i * 6.5) + 0.5}h-2`} />);
  return (
    <svg viewBox="6 76 1908 981" className="block h-auto w-full text-[12px]" shapeRendering="crispEdges">
      <rect x="6" y="76" width="1908" height="981" fill="#fff" />
      <rect x="49" y="77" width="1816" height="961" fill="#f8f8f8" />
      {BANDS.map(([a, b]) => <rect key={a} x={a} y="77" width={b - a} height="961" fill="#ccffcc" />)}
      <path d={gridX} stroke="#d4d4d4" strokeDasharray="4 4" />
      <path d={gridY} stroke="#d4d4d4" strokeDasharray="3 3" />
      <MainPane />
      <VolumePane />
      <path d="M1570.5 77V1038" stroke="#ff0000" />

      <rect x="6" y="77" width="42" height="797" fill="#fff" />
      <rect x="1862" y="77" width="3" height="402" fill={RED} />
      <rect x="1862" y="479" width="3" height="394" fill={BLUE} />
      <rect x="1866" y="77" width="48" height="961" fill="#fff" />
      <g stroke="#909090" fill="none">
        <path d="M6.5 76V1057M6 76.5H1914M1913.5 76V1057M6 874.5H1914M6 1038.5H1914M6 1056.5H1914M48.5 77V1056M1866.5 77V1056" />
        {minor}
        {[...RIGHT_LABELS, ...SUB_RIGHT].map(([y]) => <path key={y} d={`M1866 ${y + 0.5}h6`} />)}
        {SUB_LEFT.map(([y]) => <path key={y} d={`M42 ${y + 0.5}h6`} />)}
        {TIMES.map(([x]) => <path key={x} d={`M${x + 0.5} 1038V1056`} />)}
      </g>
      <AxisLabels labels={LEFT_LABELS} x={46} anchor="end" />
      <AxisLabels labels={SUB_LEFT} x={41} anchor="end" />
      <AxisLabels labels={RIGHT_LABELS} x={1874} anchor="start" />
      <AxisLabels labels={SUB_RIGHT} x={1874} anchor="start" />
      <text x="1867" y="89" fill={RED}>LC:2,04</text>
      <text x="1867" y="101" fill={BLUE}>HC:-1,5</text>
      <PriceTag x={10} width={34} text="5,000" />
      <text x="12" y="453" fill={RED} className="text-[11px]">1,20%</text>
      <PriceTag x={1873} width={38} text="25,000" />
      <text x="1875" y="453" fill={RED} className="text-[11px]">0,20%</text>

      {/* time axis */}
      <g fill="#404040" className="text-[11px]">
        {TIMES.map(([x, label]) => label && <text key={x} x={x + 2} y="1050">{label}</text>)}
        <rect x="1867" y="1039" width="46" height="17" fill="#fff" />
        <text x="1875" y="1050">10:21:3</text>
      </g>
      <rect x="1502.5" y="1039" width="135" height="16" fill="#ffdc70" stroke="#000" />
      <text x="1505" y="1051" fill="#404040">2024/10/04(금) 10:03:00</text>

      {/* legend */}
      <rect x="49" y="81" width="6" height="5" fill="#3366ff" />
      <rect x="53.500" y="82.500" width="4" height="5" fill="#c0c0c0" stroke="#808080" />
      <rect x="59.5" y="78.5" width="107" height="14" fill="#ececec" stroke="#c0c0c0" />
      <text x="63" y="90" fill="#404040">삼현 매물대 수(13)</text>
      <g fill="none" stroke="#404040">
        <rect x="12.5" y="96.5" width="13" height="13" />
        <path d="M14 99.5h10M14 102.5h10M14 105.5h10M14.5 99v8M17.5 99v8M20.5 99v8M23.5 99v8" stroke="#707070" />
      </g>
      <rect x="1903" y="878" width="8" height="7" fill="#404040" />
      <path d="M1905 880h1v1h2v-1h1v3h-1v-1h-2v1h-1z" fill="#fff" />
    </svg>
  );
}

function WindowIcons() {
  return (
    <svg viewBox="0 0 176 16" className="h-4 w-[176px]" fill="none" stroke="#a8b4d4" shapeRendering="crispEdges">
      <path d="M5.5 2.5h7v6h-7zM5.5 3.5h7M1.5 6.5v6h7v-4M1.5 6.5h3M1.5 7.5h3" />
      <path d="M21 11.5h12M21 13.5h12M21 11v3M33 11v3" />
      <path d="M44.5 2.5h9v7h-9zM44.5 3.5h9M41.5 6v7.5h8" />
      <path d="M62 2.5h8v2h-1v4h2v2H61v-2h2v-4h-1z" fill="#a8b4d4" />
      <path d="M66.5 10v5" />
      <path d="M79 3h9v2M79 3v2M83.500 3v10M81 12.500h5" strokeWidth="2" />
      <path d="M96 5V3h5v4h-3v3M98 11v2" strokeWidth="2" />
      <path d="M114.500 1v14" stroke="#6c7c9c" />
      <path d="M122 12h10" strokeWidth="2" />
      <path d="M142.500 4v-.5h7v6h-2M142.500 3.500h7M140.500 6.500h7v6h-7zM140 7.500h7" />
      <path d="M160 4l9 9M169 4l-9 9" />
    </svg>
  );
}

function TitleBar() {
  return (
    <header className="mt-px mr-px ml-px flex h-6 items-center bg-[#385490] pr-1 pl-0.5 text-[13px] text-white">
      <span className="flex h-4 w-[14px] items-center justify-center rounded-[3px] border border-white text-[11px] font-bold">1</span>
      <h1 className="ml-[5px] flex gap-2 whitespace-nowrap">
        {STATS.map((s) => <span key={s}>{s}</span>)}
      </h1>
      <div className="ml-auto">
        <WindowIcons />
      </div>
    </header>
  );
}

function Caret() {
  return (
    <svg viewBox="0 0 8 8" className="h-2 w-2" shapeRendering="crispEdges">
      <path d="M1 2h6L4 6z" fill="#505050" />
    </svg>
  );
}

const TOOL = "flex h-5 items-center justify-center border border-[#909090] bg-[#ececec]";

function ArrowButton({ label, wide }: { label: string; wide?: boolean }) {
  return (
    <button aria-label={label} className={`${TOOL} ${wide ? "w-[14px]" : "w-[11px]"} border-l-0`}>
      <Caret />
    </button>
  );
}

function Segments({ items, active }: { items: string[]; active?: string }) {
  return (
    <div className="flex">
      {items.map((item) => (
        <button
          key={item}
          className={`-mr-px flex h-5 w-5 items-center justify-center border border-[#909090] ${item === active ? "bg-[#4888cc] text-white" : "bg-[#e4e4e4]"}`}
        >
          {item}
        </button>
      ))}
    </div>
  );
}

function Toolbar() {
  return (
    <div className="flex h-5 items-center text-[12px] text-black">
      <button aria-label="panel" className={`${TOOL} w-[18px]`}>
        <svg viewBox="0 0 16 16" className="h-4 w-4" shapeRendering="crispEdges" fill="none" stroke="#404040">
          <path d="M5.500 2.500h8v11h-8zM5 3.500h8M2 6h3v5H2zM2 8.500h5" />
          <path d="M7 6v5l-3-2.500z" fill="#404040" />
        </svg>
      </button>
      <select aria-label="종류" className="ml-0.5 h-5 w-[18px] appearance-none border border-[#909090] bg-[#ececec] pl-0.5 text-[#606060]">
        <option>주</option>
      </select>
      <ArrowButton label="종류 열기" wide />
      <button className={`${TOOL} ml-px w-5`}>전</button>
      <input aria-label="종목코드" defaultValue="437730" className="ml-px h-5 w-[55px] border border-[#909090] bg-white pl-[3px] text-[11px]" />
      <ArrowButton label="종목 열기" wide />
      <button aria-label="검색" className={`${TOOL} w-[18px]`}>
        <svg viewBox="0 0 16 16" className="h-4 w-4" fill="none" stroke="#606060" strokeWidth="1.500">
          <circle cx="7" cy="6" r="4" />
          <path d="M10 9l4 5" />
        </svg>
      </button>
      <button aria-label="소리" className={`${TOOL} ml-[3px] w-[18px]`}>
        <svg viewBox="0 0 16 16" className="h-4 w-4" shapeRendering="crispEdges" fill="#606060">
          <path d="M2 5h2l3-3v12l-3-3H2zM9 5h1v2H9zM9 9h1v2H9zM12 5h1v2h-1zM12 9h1v2h-1z" />
        </svg>
      </button>
      <ArrowButton label="소리 열기" />
      <span className="ml-0.5 flex h-[18px] w-[17px] items-center justify-center bg-[#086060] text-white">신</span>
      <div className="relative">
        <input aria-label="종목명" defaultValue="삼현" className="block h-5 w-[64px] bg-white pl-[3px] text-[#800040]" />
        <svg viewBox="0 0 8 8" className="absolute right-0.5 bottom-0.5 h-1.5 w-1.5"><path d="M8 0v8H0z" fill="#a0a0a0" /></svg>
      </div>
      <div className="ml-0.5 flex gap-[3px]">
        <Segments items={["일", "주", "월", "년"]} />
        <Segments items={["분", "초", "틱"]} active="초" />
        <Segments items={["1", "3", "5", "10", "15", "30", "45", "60"]} active="5" />
      </div>
      <input aria-label="간격" defaultValue="5" className="ml-[3px] h-5 w-[25px] border border-[#909090] bg-white text-center" />
      <ArrowButton label="간격 열기" wide />
      <input aria-label="봉 개수" defaultValue="477" className="ml-0.5 h-5 w-[31px] border border-[#909090] bg-white pr-0.5 text-right" />
      <span className="w-[35px] text-[#606060]">/2701</span>
      <button aria-label="봉 추가" className={`${TOOL} w-[18px]`}>
        <svg viewBox="0 0 16 16" className="h-4 w-4" shapeRendering="crispEdges" fill="#505050">
          <path d="M2 3h3v6H2zM3 1h1v10H3zM7 4h3v5H7zM8 2h1v8H8zM11 10h4v1h-4zM12 9h2v4h-2zM10 11h5v1h-5z" />
        </svg>
      </button>
      <button aria-label="지표 추가" className={`${TOOL} w-[18px]`}>
        <svg viewBox="0 0 16 16" className="h-4 w-4" fill="none" stroke="#505050">
          <path d="M1 7l4-4 3 4 5-5M1 11l4-3 4 3M12 9v6M9 12h6" />
        </svg>
      </button>
      <button aria-label="저장" className={`${TOOL} w-[18px]`}>
        <svg viewBox="0 0 16 16" className="h-4 w-4" fill="none" stroke="#505050" shapeRendering="crispEdges">
          <path d="M2.500 1.500h10l1 1v11h-11zM5.500 1.500v4h6v-4M4.500 13.500v-5h7v5M6 10.500h4" />
        </svg>
      </button>
      <button aria-label="설정" className={`${TOOL} w-[18px]`}>
        <svg viewBox="0 0 16 16" className="h-4 w-4" fill="none" stroke="#606060">
          <circle cx="8" cy="8" r="4" strokeWidth="2.500" />
          <circle cx="8" cy="8" r="6" strokeWidth="2" strokeDasharray="2.400 2.300" />
        </svg>
      </button>
      <label className="ml-0.5 flex items-center gap-[3px]">
        <input type="checkbox" className="h-3 w-3 appearance-none border border-[#707070] bg-white" />D
      </label>
    </div>
  );
}

function QuoteBar() {
  return (
    <div className="flex h-5 items-center gap-[3px] text-[12px] text-black">
      <div className="flex h-5 w-[749px] items-center border border-[#808080] bg-[#f0f0f0] text-right whitespace-nowrap">
        <span className="flex w-[72px] items-center justify-end gap-1 text-[#e02010]">
          25,100
          <svg viewBox="0 0 10 9" className="h-[9px] w-2.5"><path d="M5 0l5 9H0z" fill="#e81808" /></svg>
        </span>
        <span className="w-[49px] text-[#e02010]">150</span>
        <span className="w-[50px] border-r border-[#b0b0b0] text-[#e02010]">+0.60%</span>
        <span className="w-[70px]">106,441</span>
        <span className="w-[59px] text-[#1850c8]">9.16%</span>
        <span className="w-[43px] border-r border-[#b0b0b0]">1.01%</span>
        <span className="w-[81px] border-r border-[#b0b0b0]">2,659백만</span>
        <span className="w-[37px]">최우선</span>
        <span className="w-[48px] text-[#e02010]">25,150</span>
        <span className="w-[55px] border-r border-[#b0b0b0] pr-1.5 text-[#e02010]">25,100</span>
        <span className="w-[13px]">시</span>
        <span className="w-[42px] text-[#e02010]">25,200</span>
        <span className="w-[18px]">고</span>
        <span className="w-[43px] text-[#e02010]">25,400</span>
        <span className="w-[19px]">저</span>
        <span className="w-[42px] text-[#1850c8]">24,500</span>
      </div>
      <button className="h-5 w-[39px] border border-[#909090] bg-[#f8d0cc]">매수</button>
      <button className="h-5 w-10 border border-[#909090] bg-[#c8e0f8]">매도</button>
    </div>
  );
}

const CONTROLS: [string, string][] = [
  ["재생", "M6 3v10l5-5z"],
  ["뒤로", "M7 3v10L2 8zM13 3v10L8 8z"],
  ["정지", "M4 4h8v8H4z"],
  ["앞으로", "M3 3v10l5-5zM9 3v10l5-5z"],
];

const CHART_TOOLS: [string, string][] = [
  ["영역 추가", "M2 2h9v8H2zM8 7h7v8H8zM11.500 7v8M8 11h7"],
  ["영역 겹침", "M2 2h9v8H2zM7 6h8v8H7zM7 7h8"],
  ["패턴", "M1 3h14M2 10l4-3 3 3 5-5M1 13h14"],
  ["십자선", "M2 4h13M6 2v12M7 5l6 6M7 8V5h3"],
  ["수평선", "M1 4h14M2 13l4-7 3 5 3-4 3 5"],
  ["수직선", "M5 1v14M1 12l4-5 4 3 3-4 3 5"],
  ["추세선", "M1 14L12 2M6 12l4-8 5 9"],
  ["지우개", "M2 8l6-5 5 2-6 6-5-1zM9 10v5M12 10v5M15 10v5"],
  ["비교", "M5 2h10v8H5zM2 6h10v8H2zM3 12l3-3 2 2 3-4"],
  ["확대", "M11 7a4 4 0 1 1-8 0a4 4 0 1 1 8 0M10 10l5 5"],
];

function BottomBar() {
  return (
    <footer className="flex h-[18px] items-stretch bg-[#f0f0f0]">
      <button aria-label="왼쪽" className="flex w-4 items-center justify-center border-r border-b border-[#606060] bg-[#f0f0f0]">
        <svg viewBox="0 0 8 10" className="h-2.5 w-2"><path d="M6 0v10L1 5z" /></svg>
      </button>
      <div className="flex flex-1 bg-[#f8f8f8]">
        <div className="grow-[1103]" />
        <div className="grow-[268] border-t border-r border-b-2 border-l border-t-white border-r-[#707070] border-b-[#707070] border-l-[#d0d0d0] bg-[#f0f0f0]" />
        <div className="grow-[152]" />
      </div>
      {CONTROLS.map(([label, d]) => (
        <button key={label} aria-label={label} className="flex w-[17px] items-center justify-center border-r-2 border-b-2 border-[#808080] bg-[#f0f0f0]">
          <svg viewBox="0 0 16 16" className="h-3.5 w-3.5" shapeRendering="crispEdges"><path d={d} /></svg>
        </button>
      ))}
      <label className="ml-1 flex w-[71px] flex-col justify-between py-0.5">
        <input
          type="range"
          aria-label="속도"
          defaultValue="18"
          className="h-2.5 w-full appearance-none bg-transparent [&::-webkit-slider-runnable-track]:h-0.5 [&::-webkit-slider-runnable-track]:bg-[#909090] [&::-webkit-slider-thumb]:-mt-1 [&::-webkit-slider-thumb]:h-2.5 [&::-webkit-slider-thumb]:w-1 [&::-webkit-slider-thumb]:appearance-none [&::-webkit-slider-thumb]:border [&::-webkit-slider-thumb]:border-[#707070] [&::-webkit-slider-thumb]:bg-[#e0e0e0]"
        />
        <svg viewBox="0 0 71 3" className="h-[3px] w-full" shapeRendering="crispEdges">
          <path d="M2.500 0v3M9.500 0v3M16.500 0v3M23.500 0v3M31.500 0v3M38.500 0v3M45.500 0v3M53.500 0v3M60.500 0v3M68.500 0v3" stroke="#000" />
        </svg>
      </label>
      <div className="ml-1.5 flex">
        {CHART_TOOLS.map(([label, d]) => (
          <button key={label} aria-label={label} className={`flex w-[17px] items-center justify-center ${label === "십자선" ? "border border-[#a0a0a0] bg-white" : ""}`}>
            <svg viewBox="0 0 16 16" className="h-[15px] w-[15px]" fill="none" stroke="#707070"><path d={d} /></svg>
          </button>
        ))}
        <button aria-label="축소" className="flex w-[17px] items-center justify-center">
          <svg viewBox="0 0 10 10" className="h-2.5 w-2.5"><path d="M0 4h10v2H0z" fill="#505050" /></svg>
        </button>
        <button aria-label="늘리기" className="flex w-[17px] items-center justify-center">
          <svg viewBox="0 0 10 10" className="h-2.5 w-2.5"><path d="M0 4h10v2H0zM4 0h2v10H4z" fill="#505050" /></svg>
        </button>
        <button className="w-[17px] text-[13px] leading-4 font-bold text-[#505050]">A</button>
      </div>
    </footer>
  );
}

export default function App() {
  return (
    <div className="min-h-screen bg-black font-['Liberation_Sans','Noto_Sans_CJK_KR',sans-serif]">
      <TitleBar />
      <div className="ml-[3px] mr-[3px] border-r-[3px] border-b-[3px] border-l-[3px] border-[#e4e4e4] bg-[#d0d0d0]">
        <div className="flex h-[51px] flex-col gap-[3px] pt-[5px] pl-px">
          <Toolbar />
          <QuoteBar />
        </div>
        <Chart />
        <BottomBar />
      </div>
    </div>
  );
}
